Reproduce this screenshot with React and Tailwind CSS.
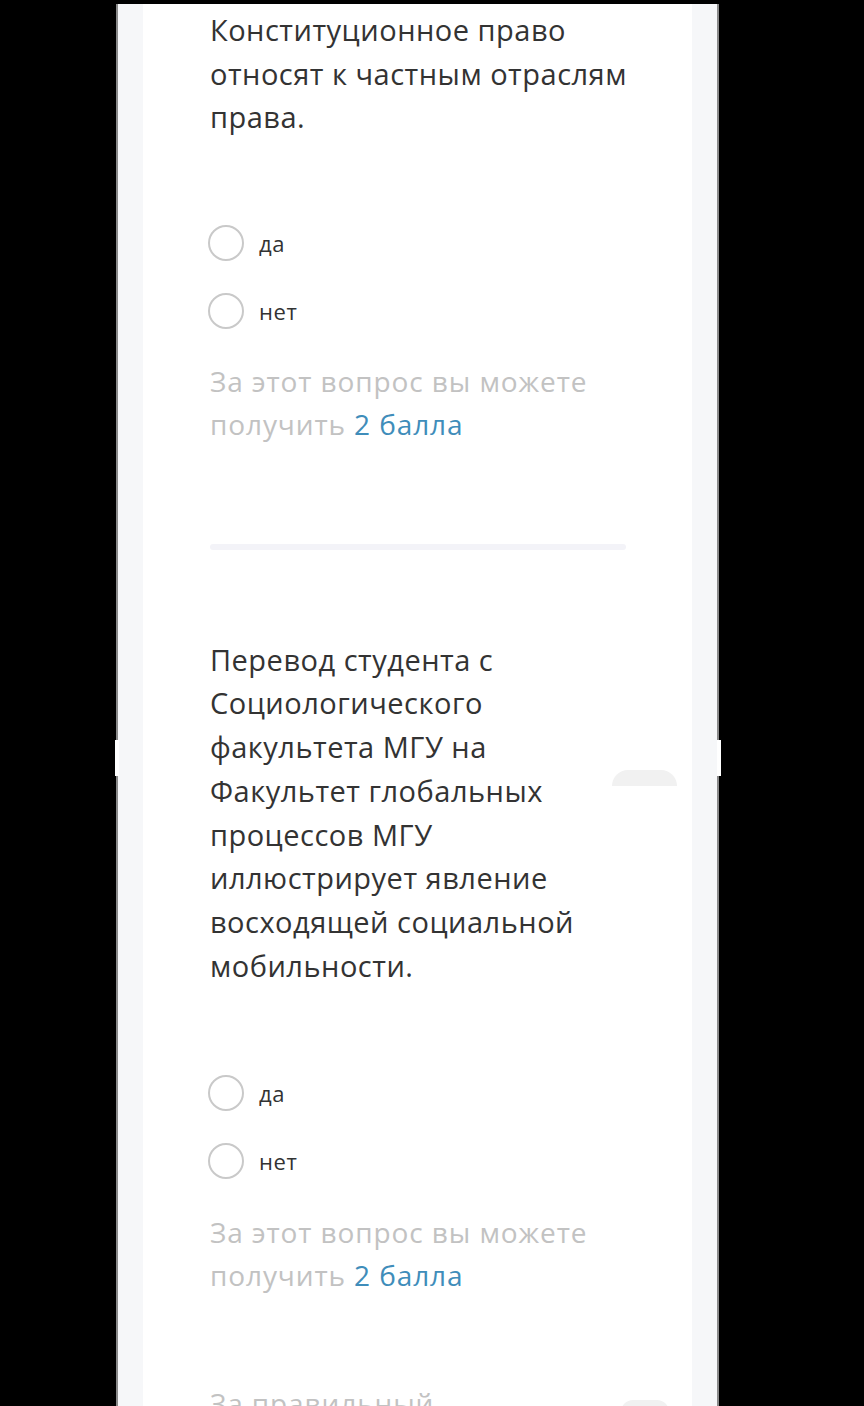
import React from "react";

const font = { fontFamily: '"Open Sans", "Noto Sans", Arial, sans-serif' };

function Radio({ label }) {
  return (
    <div className="flex items-center h-[36px] ml-[-2px]">
      <div className="w-[36px] h-[36px] rounded-full border-2 border-[#c9c9c9] bg-white shrink-0" />
      <span className="ml-[15px] text-[22px] tracking-[0.6px] text-[#333333] leading-none">{label}</span>
    </div>
  );
}

function Points() {
  return (
    <div className="text-[28px] tracking-[0.9px] leading-[43.5px] text-[#c2c2c2] whitespace-nowrap">
      За этот вопрос вы можете
      <br />
      получить <span className="text-[#3f8dba]">2 балла</span>
    </div>
  );
}

export default function App() {
  return (
    <div className="relative w-[864px] h-[1406px] bg-black overflow-hidden" style={font}>
      <div className="absolute left-[115px] top-[740px] w-[4px] h-[36px] bg-white" />
      <div className="absolute left-[717px] top-[740px] w-[4px] h-[36px] bg-white" />
      <div className="ml-[116px] mt-[4px] w-[603px] h-[1402px] flex border-l-2 border-r-2 border-[#8a8a8a]">
        <div className="w-[25px] bg-[#f6f7f9]" />
        <div className="w-[550px] bg-white pl-[67px] pt-[4px] relative">
          <div className="absolute left-[469px] top-[766px] w-[65px] h-[16px] rounded-t-full bg-[#f1f1f1]" />
          <div className="absolute left-[478px] top-[1396px] w-[48px] h-[12px] rounded-t-full bg-[#f1f1f1]" />
          <div className="text-[29px] tracking-[0.5px] leading-[43.5px] text-[#333333] whitespace-nowrap">
            Конституционное право
            <br />
            относят к частным отраслям
            <br />
            права.
          </div>
          <div className="mt-[86px] flex flex-col gap-[32px]">
            <Radio label="да" />
            <Radio label="нет" />
          </div>
          <div className="mt-[31px]">
            <Points />
          </div>
          <div className="mt-[97px] w-[416px] h-[6px] bg-[#f3f3f8] rounded-sm" />
          <div className="mt-[88px] text-[29px] tracking-[0.5px] leading-[43.8px] text-[#333333] whitespace-nowrap">
            Перевод студента с
            <br />
            Социологического
            <br />
            факультета МГУ на
            <br />
            Факультет глобальных
            <br />
            процессов МГУ
            <br />
            иллюстрирует явление
            <br />
            восходящей социальной
            <br />
            мобильности.
          </div>
          <div className="mt-[87px] flex flex-col gap-[32px]">
            <Radio label="да" />
            <Radio label="нет" />
          </div>
          <div className="mt-[32px]">
            <Points />
          </div>
          <div className="mt-[84px] text-[28px] tracking-[0.9px] leading-[43.5px] text-[#c2c2c2] whitespace-nowrap">
            За правильный
          </div>
        </div>
        <div className="w-[25px] bg-[#f6f7f9]" />
      </div>
    </div>
  );
}
